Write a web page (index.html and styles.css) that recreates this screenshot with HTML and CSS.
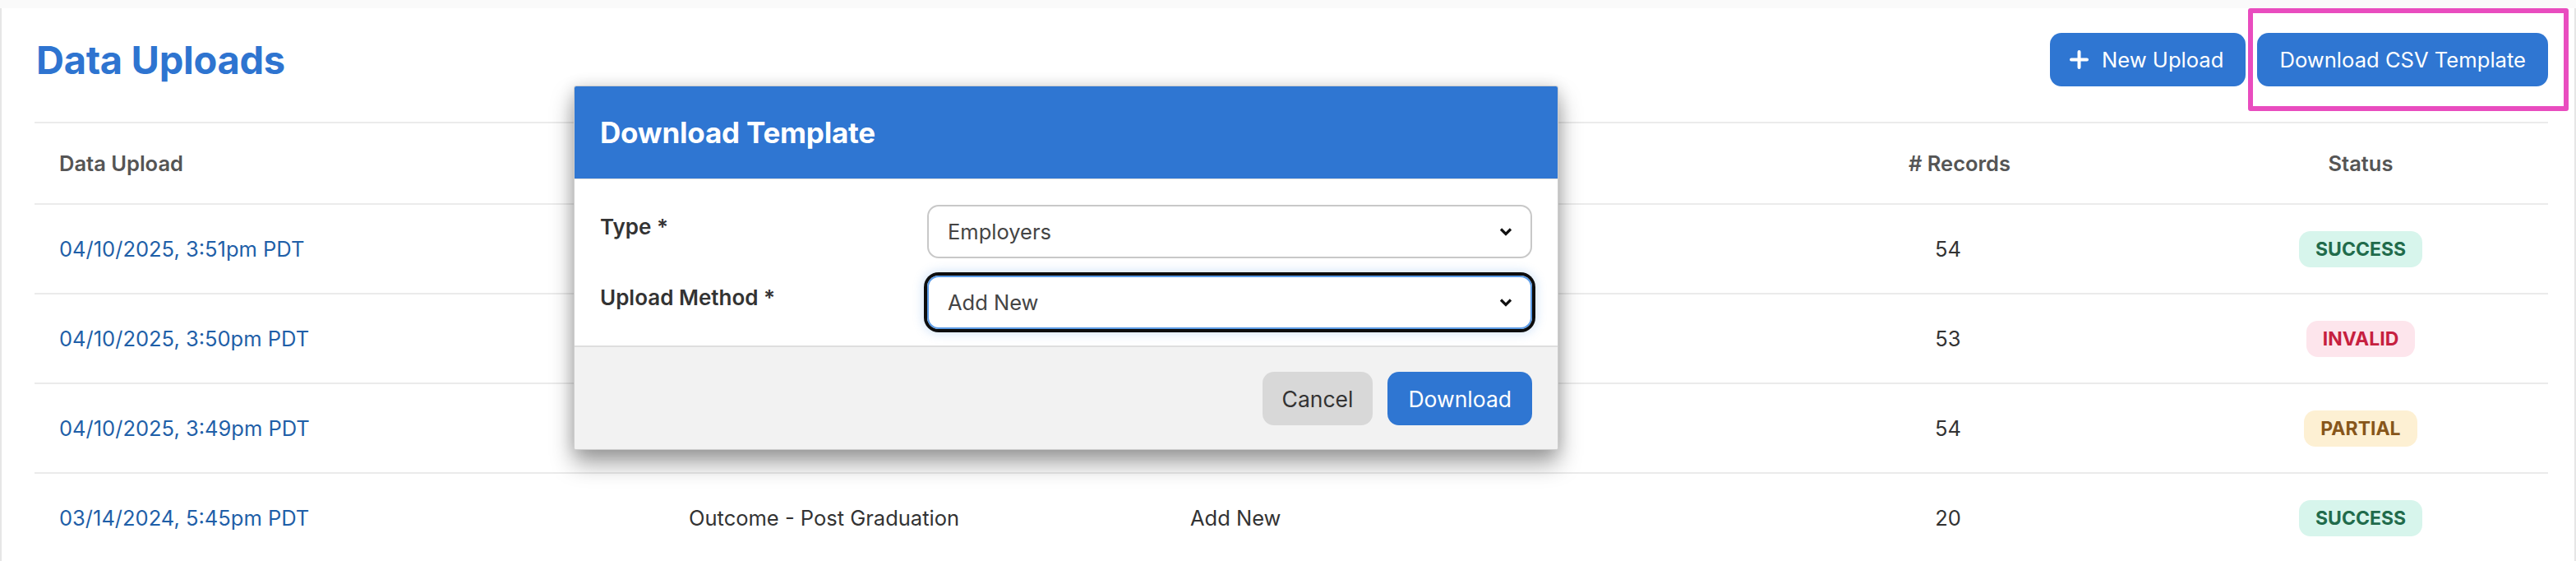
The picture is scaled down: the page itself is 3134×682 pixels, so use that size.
FILE: index.html
```html
<!DOCTYPE html>
<html>
<head>
<meta charset="utf-8">
<link rel="stylesheet" href="styles.css">
<title>Data Uploads</title>
</head>
<body>
<div class="card">

  <div class="page-head">
    <h1>Data Uploads</h1>
    <div class="actions">
      <button class="btn btn-blue btn-new" type="button">
        <svg class="plus" width="23" height="23" viewBox="0 0 23 23"><path d="M11.5 2v19M2 11.5h19" stroke="#fff" stroke-width="4" stroke-linecap="round"/></svg>
        New Upload
      </button>
      <span class="marked">
        <button class="btn btn-blue" type="button">Download CSV Template</button>
      </span>
    </div>
  </div>

  <div class="table">
    <div class="row head">
      <div class="cell">Data Upload</div>
      <div class="cell">Type</div>
      <div class="cell">Upload Method</div>
      <div class="cell center records">&#35; Records</div>
      <div class="cell center">Status</div>
    </div>
    <div class="row">
      <div class="cell"><a href="#">04/10/2025, 3:51pm PDT</a></div>
      <div class="cell">Employers</div>
      <div class="cell">Add New</div>
      <div class="cell center">54</div>
      <div class="cell center"><span class="badge ok">Success</span></div>
    </div>
    <div class="row">
      <div class="cell"><a href="#">04/10/2025, 3:50pm PDT</a></div>
      <div class="cell">Employers</div>
      <div class="cell">Add New</div>
      <div class="cell center">53</div>
      <div class="cell center"><span class="badge bad">Invalid</span></div>
    </div>
    <div class="row">
      <div class="cell"><a href="#">04/10/2025, 3:49pm PDT</a></div>
      <div class="cell">Employers</div>
      <div class="cell">Add New</div>
      <div class="cell center">54</div>
      <div class="cell center"><span class="badge part">Partial</span></div>
    </div>
    <div class="row">
      <div class="cell"><a href="#">03/14/2024, 5:45pm PDT</a></div>
      <div class="cell">Outcome - Post Graduation</div>
      <div class="cell">Add New</div>
      <div class="cell center">20</div>
      <div class="cell center"><span class="badge ok">Success</span></div>
    </div>
  </div>

</div>

<div class="modal">
  <div class="modal-head">Download Template</div>
  <div class="modal-body">
    <label class="field-label">Type *</label>
    <div class="select">
      <span>Employers</span>
      <svg width="16" height="11" viewBox="0 0 16 11"><path d="M2 2.5l6 6 6-6" fill="none" stroke="#111" stroke-width="3.2"/></svg>
    </div>
    <label class="field-label">Upload Method *</label>
    <div class="select focused">
      <span>Add New</span>
      <svg width="16" height="11" viewBox="0 0 16 11"><path d="M2 2.5l6 6 6-6" fill="none" stroke="#111" stroke-width="3.2"/></svg>
    </div>
  </div>
  <div class="modal-foot">
    <button class="btn btn-grey" type="button">Cancel</button>
    <button class="btn btn-blue btn-dl" type="button">Download</button>
  </div>
</div>
</body>
</html>
```

FILE: styles.css
```css
body {
  margin: 0;
  background: #fafafa;
  font-family: Inter, "Liberation Sans", sans-serif;
  color: #333;
}

.card {
  margin-top: 10px;
  min-height: 672px;
  background: #fff;
  border-left: 2px solid #e6e6e6;
  border-right: 2px solid #e6e6e6;
  padding: 0 32px 0 40px;
}

.page-head {
  display: flex;
  align-items: center;
  justify-content: space-between;
  padding: 30px 0 43px;
}

.page-head h1 {
  margin: 0 0 0 2px;
  font-size: 47px;
  font-weight: 700;
  color: #2e74d0;
  letter-spacing: -0.3px;
}

.actions {
  display: flex;
  gap: 14px;
}

.btn {
  font-family: inherit;
  font-size: 25.6px;
  height: 65px;
  border: none;
  border-radius: 14px;
  padding: 0 27px;
  cursor: pointer;
}

.btn-blue {
  background: #2f76d2;
  color: #fff;
}

.btn-new {
  display: flex;
  align-items: center;
  gap: 16px;
  padding: 0 27px 0 24px;
}

.btn-grey {
  background: #d8d8d8;
  color: #333;
  padding: 0 24px;
}

.marked {
  position: relative;
  display: block;
}

.marked::after {
  content: "";
  position: absolute;
  left: -11px;
  right: -25px;
  top: -30px;
  bottom: -30px;
  border: 6px solid #e94cbf;
  border-radius: 3px;
}

.table .row {
  display: grid;
  grid-template-columns: 766px 610px 677px 550px 454px;
  align-items: center;
  height: 107px;
  border-top: 2px solid #ebebeb;
  font-size: 25.5px;
}

.table .row.head {
  height: 97px;
  font-weight: 600;
  color: #555;
}

.cell {
  padding-left: 30px;
}

.cell.center {
  padding-left: 0;
  text-align: center;
}

.cell.records {
  padding-left: 28px;
}

.cell a {
  color: #1f5fa8;
  text-decoration: none;
}

.badge {
  display: inline-block;
  height: 44px;
  line-height: 44px;
  padding: 0 20px;
  border-radius: 14px;
  font-size: 23px;
  font-weight: 700;
  text-transform: uppercase;
}

.badge.ok { background: #d7f5ec; color: #216b4b; }
.badge.bad { background: #fde5ec; color: #c6203f; }
.badge.part { background: #fdf0d3; color: #87561a; }

.modal {
  position: absolute;
  left: 698px;
  top: 104px;
  width: 1196px;
  background: #fff;
  border: 1px solid #cfcfcf;
  border-radius: 3px;
  box-shadow: 0 16px 28px rgba(0, 0, 0, 0.38), 0 0 18px rgba(0, 0, 0, 0.12);
  overflow: hidden;
}

.modal-head {
  background: #2f76d2;
  color: #fff;
  height: 112px;
  padding-left: 31px;
  display: flex;
  align-items: center;
  font-size: 35px;
  font-weight: 700;
  letter-spacing: -0.2px;
}

.modal-body {
  display: grid;
  grid-template-columns: 398px 736px;
  row-gap: 21px;
  padding: 31px 31px 20px;
  border-top: 1px solid #e0e0e0;
}

.field-label {
  padding-top: 12px;
  font-size: 26px;
  font-weight: 600;
  color: #333;
  line-height: 30px;
}

.select {
  box-sizing: border-box;
  height: 65px;
  border: 2px solid #c8c8c8;
  border-radius: 14px;
  display: flex;
  align-items: center;
  justify-content: space-between;
  padding: 0 22px 0 23px;
  font-size: 25.5px;
  color: #444;
}

.select.focused {
  border-color: #5b9be6;
  box-shadow: 0 0 0 4px #0d0d0d, 0 0 12px 6px rgba(91, 155, 230, 0.25);
}

.modal-foot {
  display: flex;
  justify-content: flex-end;
  gap: 18px;
  background: #f2f2f2;
  border-top: 2px solid #dedede;
  padding: 30px 31px 29px;
}

.modal-foot .btn {
  font-size: 26.5px;
}

.btn-dl {
  padding: 0 25px;
}
```
